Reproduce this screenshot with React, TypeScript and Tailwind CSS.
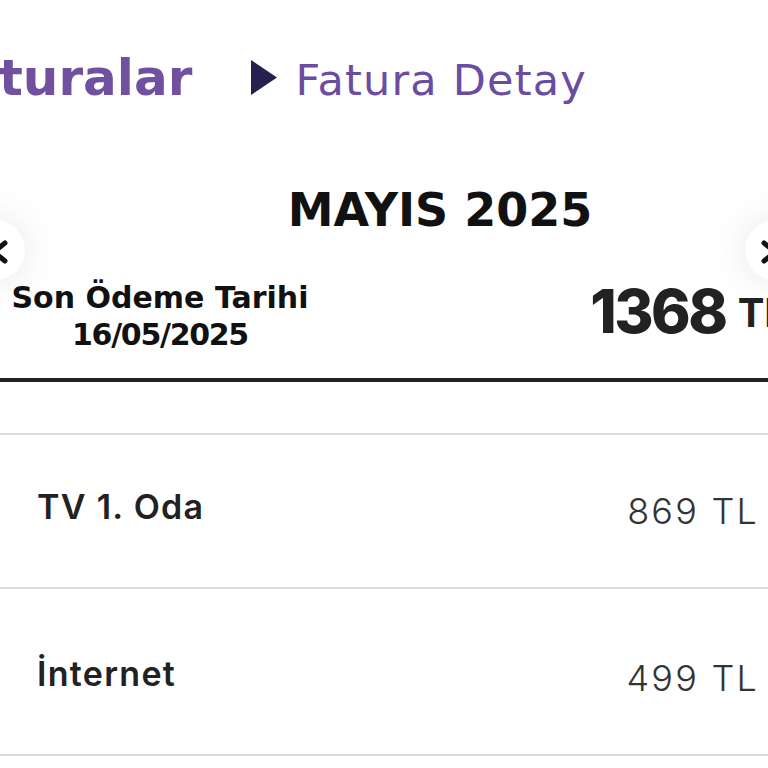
import React from "react";

const dejavu = { fontFamily: "'DejaVu Sans', 'Noto Sans', sans-serif" };
const inter = { fontFamily: "Inter, 'Noto Sans', sans-serif" };

const items = [
  { name: "TV 1. Oda", price: "869 TL" },
  { name: "İnternet", price: "499 TL" },
];

function NavButton({ side }: { side: "left" | "right" }) {
  const left = side === "left";
  return (
    <div
      className={`absolute top-[220px] h-[60px] w-[60px] rounded-full bg-white shadow-[0_0_40px_rgba(0,0,0,0.1)] ${
        left ? "left-[-35px]" : "left-[745px]"
      }`}
    >
      <svg
        width="18"
        height="24"
        viewBox="0 0 18 24"
        className={`absolute top-[20px] ${left ? "left-[25px]" : "left-[16px]"}`}
      >
        <path
          d={left ? "M15 3 L4 12 L15 21" : "M3 3 L14 12 L3 21"}
          stroke="#111"
          strokeWidth="5"
          fill="none"
          strokeLinecap="round"
          strokeLinejoin="round"
        />
      </svg>
    </div>
  );
}

export default function App() {
  return (
    <div className="relative h-[768px] w-[768px] overflow-hidden bg-white">
      {/* Breadcrumb */}
      <div className="h-[155px] pt-[53px]" style={dejavu}>
        <div className="-ml-[66px] flex items-baseline whitespace-nowrap">
          <span className="text-[50px] font-bold leading-none text-[#7150a0]">Faturalar</span>
          <svg width="26" height="35" viewBox="0 0 26 35" className="ml-[59px]">
            <polygon points="0,0 26,17.5 0,35" fill="#24204f" />
          </svg>
          <span className="ml-[18px] text-[43px] font-normal leading-none tracking-[1.2px] text-[#6b4ca3]">
            Fatura Detay
          </span>
        </div>
      </div>

      {/* Month summary */}
      <div className="pl-[112px] pt-[32px] text-center text-[46px] font-bold leading-none text-[#111]" style={dejavu}>
        MAYIS 2025
      </div>
      <div className="mt-[46px] flex items-start justify-between">
        <div className="w-[320px] text-center text-[30px] font-bold leading-[37px] text-[#111]" style={dejavu}>
          <div>Son Ödeme Tarihi</div>
          <div className="tracking-[-1.3px]">16/05/2025</div>
        </div>
        <div className="-mr-[19px] flex items-start gap-[12px] text-[#222]" style={inter}>
          <span className="mt-[2px] text-[60px] font-extrabold leading-none tracking-[-2.5px]">1368</span>
          <span className="mt-[14px] text-[40px] font-bold leading-none">TL</span>
        </div>
      </div>
      <NavButton side="left" />
      <NavButton side="right" />

      <div className="mt-[25px] h-[4px] w-full bg-[#222]" />
      <div className="mt-[51px] h-[2px] w-full bg-[#dcdcdc]" />

      {items.map((item, i) => (
        <div key={item.name} className={i > 0 ? "mt-[13px]" : ""} style={inter}>
          <div className="flex h-[152px] items-center justify-between pl-[37px] pr-[9px]">
            <span className="-mt-[10px] text-[34px] font-semibold tracking-[1.3px] text-[#222]">{item.name}</span>
            <span className="text-[36px] font-light tracking-[2.2px] text-[#333]">{item.price}</span>
          </div>
          <div className="h-[2px] w-full bg-[#dcdcdc]" />
        </div>
      ))}
    </div>
  );
}
